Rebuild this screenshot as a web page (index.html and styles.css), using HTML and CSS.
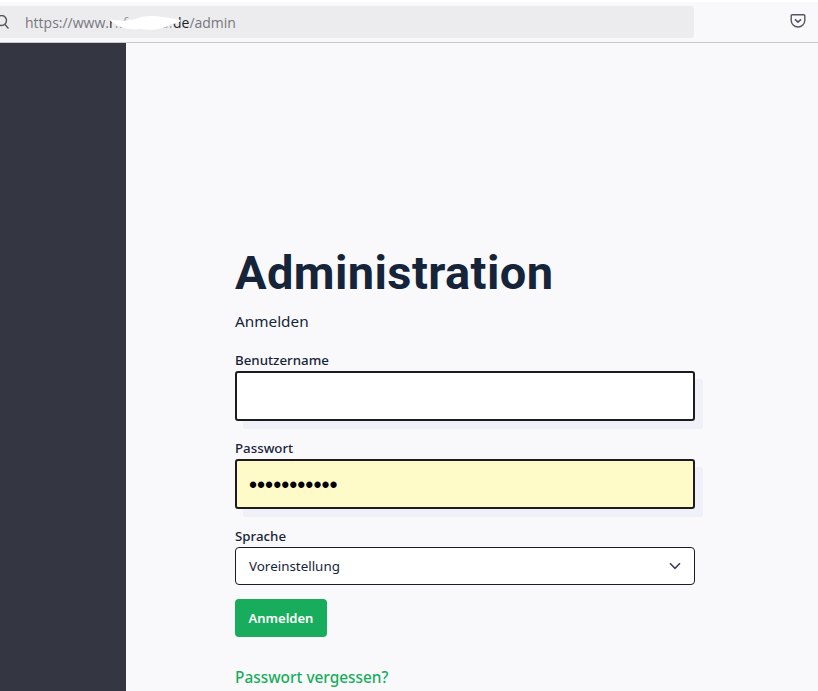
FILE: index.html
```html
<!DOCTYPE html>
<html lang="de">
<head>
<meta charset="utf-8">
<title>Administration</title>
<link rel="stylesheet" href="styles.css">
</head>
<body>
<div class="page">
  <header class="toolbar">
    <div class="urlbar">
      <svg class="search" width="16" height="16" viewBox="0 0 16 16"><circle cx="1.500" cy="5.500" r="5"/><path d="M5 9.500l3.500 4"/></svg>
      <div class="url">https://www.<span class="dark">r</span><span class="hidden">..f..a..ca.</span><span class="dark">de</span>/admin
        <svg class="blot" width="72" height="16" viewBox="0 0 72 16"><path d="M0 4c10 3 18 1 26 0 4-3 18-4 26-2 6 1 12 1 18 3 2 1-2 4-10 4-4 5-20 7-30 5-10 1-20-1-24-5C3 8-1 6 0 4z"/></svg>
      </div>
    </div>
    <svg class="pocket" width="16" height="16" viewBox="0 0 16 16"><path d="M2.200 1.800h11.600c.6 0 1 .4 1 1v4.400c0 3.800-3 6.800-6.800 6.800s-6.800-3-6.800-6.800V2.800c0-.6.4-1 1-1z"/><path d="M5 6.300l3 2.900 3-2.900"/></svg>
  </header>
  <div class="body">
    <aside class="sidebar"></aside>
    <main class="content">
      <h1 class="title">Administration</h1>
      <p class="subtitle">Anmelden</p>
      <form class="form">
        <label class="label" for="user">Benutzername</label>
        <div class="fieldwrap"><div class="shadow"><input class="input" id="user" type="text"></div></div>
        <label class="label" for="pass">Passwort</label>
        <div class="fieldwrap"><div class="shadow"><input class="input filled" id="pass" type="password" value="abcdefghijk"></div></div>
        <label class="label" for="lang">Sprache</label>
        <div class="select" id="lang">
          <span>Voreinstellung</span>
          <svg width="12" height="8" viewBox="0 0 12 8"><path d="M1 1.300l5 5 5-5"/></svg>
        </div>
        <button class="button" type="button">Anmelden</button>
        <a class="forgot" href="#">Passwort vergessen?</a>
      </form>
    </main>
  </div>
</div>
</body>
</html>
```
FILE: styles.css
```css
* { box-sizing: border-box; }
html, body { margin: 0; height: 100%; overflow: hidden; }
body { font-family: "Noto Sans", "Open Sans", sans-serif; background: #f9f9fb; color: #16243a; }
.page { display: flex; flex-direction: column; height: 691px; }

.toolbar { height: 43px; flex: none; background: #f9f9fb; border-top: 2px solid #fff; border-bottom: 1px solid #c8c8ca; display: flex; align-items: flex-start; padding-top: 4px; }
.urlbar { width: 694px; height: 32px; background: #ececee; border-radius: 0 4px 4px 0; display: flex; align-items: center; padding-left: 25px; position: relative; }
.search { position: absolute; left: 0; top: 9px; fill: none; stroke: #55555c; stroke-width: 1.4; }
.url { font-family: "Open Sans", sans-serif; font-size: 14px; color: #77777d; white-space: nowrap; position: relative; }
.dark { color: #222; }
.hidden { color: #9a9a9e; letter-spacing: 0.5px; }
.blot { position: absolute; left: 85px; top: 2px; fill: #fff; }
.pocket { margin-left: 96px; margin-top: 7px; fill: none; stroke: #55555f; stroke-width: 1.4; }
.pocket path:last-child { stroke-width: 1.6; }

.body { flex: 1; display: flex; min-height: 0; }
.sidebar { width: 126px; background: #343742; flex: none; }
.content { flex: 1; padding: 203px 0 0 109px; background: #f9f9fb; }

.title { margin: 0; font-family: Roboto, sans-serif; font-size: 47px; line-height: 54px; font-weight: 700; letter-spacing: 0.4px; color: #16243a; }
.subtitle { margin: 11px 0 0; font-size: 15.300px; line-height: 20px; color: #16243a; }
.form { width: 460px; margin-top: 20px; display: flex; flex-direction: column; align-items: flex-start; }
.label { display: block; font-size: 13.300px; line-height: 18px; font-weight: 500; color: #16243a; }
.fieldwrap { width: 100%; margin: 2px 0 18px; }
.shadow { box-shadow: 8px 8px 0 0 #f0f0f9; border-radius: 3px; }
.input { display: block; width: 100%; height: 50px; border: 2px solid #1c1c20; border-radius: 3px; background: #fff; padding: 3px 12px 0; font-size: 23px; font-family: "Liberation Sans", sans-serif; outline: none; }
.filled { background: #fffbc8; color: #000; }
.select { width: 100%; height: 38px; margin-top: 2px; border: 1px solid #1c1c20; border-radius: 4px; background: #fff; display: flex; align-items: center; justify-content: space-between; padding: 0 13px; font-size: 13.400px; color: #16243a; }
.select svg { fill: none; stroke: #3c4150; stroke-width: 1.6; }
.button { margin-top: 14px; width: 92px; height: 38px; border: 0; border-radius: 4px; background: #18ad5c; color: #fff; font-family: "Noto Sans", sans-serif; font-weight: 600; font-size: 13px; padding: 0; }
.forgot { margin-top: 31px; font-size: 15.400px; line-height: 20px; font-weight: 500; color: #18ad5c; text-decoration: none; }
```
